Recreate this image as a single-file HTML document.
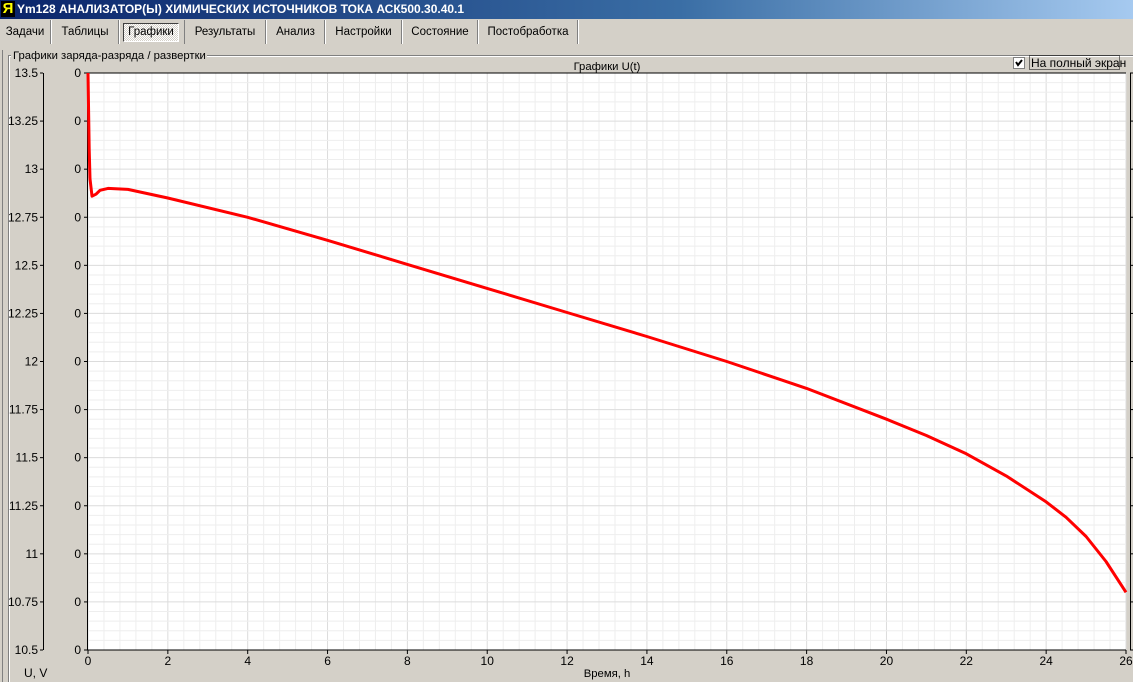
<!DOCTYPE html>
<html><head><meta charset="utf-8"><style>
body{margin:0;width:1133px;height:682px;background:#d4d0c8;overflow:hidden;font-family:"Liberation Sans",sans-serif;font-size:11px;position:relative}
#title{position:absolute;left:0;top:0;width:1133px;height:19px;background:linear-gradient(90deg,#0a246a,#3a6ea5 60%,#a6caf0);color:#fff;font-weight:bold;font-size:12px;line-height:19px}
#title span{position:absolute;left:17px}
#ico{position:absolute;left:1px;top:1px;width:14px;height:16px;background:#000;color:#ff0;font-size:15px;line-height:16px;text-align:center;font-weight:bold}
.tab{position:absolute;top:20px;height:24px;line-height:24px;font-size:11.5px;color:#000;text-align:center;border-right:1px solid #808080;box-shadow:1px 0 0 #fff;box-sizing:border-box}
#sel{border:1px solid #404040;border-right-color:#fff;border-bottom-color:#fff;box-shadow:none;top:23px;height:19px;line-height:17px;background:repeating-conic-gradient(#fff 0 25%,#d4d0c8 0 50%) 0 0/2px 2px}
svg{position:absolute;left:0;top:0}
</style></head><body>
<div id="title"><div id="ico">Я</div><span>Ym128 АНАЛИЗАТОР(Ы) ХИМИЧЕСКИХ ИСТОЧНИКОВ ТОКА АСК500.30.40.1</span></div>
<div class="tab" style="left:0;width:51px">Задачи</div>
<div class="tab" style="left:52px;width:67px">Таблицы</div>
<div class="tab" id="sel" style="left:123px;width:56px">Графики</div>
<div class="tab" style="left:184px;width:82px;border-left:1px solid #808080">Результаты</div>
<div class="tab" style="left:267px;width:58px">Анализ</div>
<div class="tab" style="left:326px;width:76px">Настройки</div>
<div class="tab" style="left:403px;width:75px">Состояние</div>
<div class="tab" style="left:479px;width:99px">Постобработка</div>
<svg id="s" width="1133" height="682" xmlns="http://www.w3.org/2000/svg" font-family="Liberation Sans, sans-serif" font-size="12"></svg>
<script>
var L=88,R=1126,T=73,B=650,o='';
o+='<path d="M8.5,682 V55.5 H11 M207,55.5 H1133" stroke="#808080" fill="none"/><path d="M9.5,682 V56.5 H11 M207,56.5 H1133" stroke="#fff" fill="none"/>';
o+='<text x="13" y="59" font-size="11.3">Графики заряда-разряда / развертки</text>';
o+='<line x1="2.5" y1="50" x2="2.5" y2="682" stroke="#808080"/>';
o+='<rect x="'+L+'" y="'+T+'" width="'+(R-L)+'" height="'+(B-T)+'" fill="#fff"/>';
var px=(R-L)/26, py=(B-T)/3;
for(var i=0;i<=65;i++){var x=L+i*px*0.4;o+='<line x1="'+x+'" y1="'+T+'" x2="'+x+'" y2="'+B+'" stroke="'+(i%5?'#eeeeee':'#dcdcdc')+'"/>';}
for(var j=0;j<=60;j++){var y=T+j*py/20;o+='<line x1="'+L+'" y1="'+y+'" x2="'+R+'" y2="'+y+'" stroke="'+(j%5?'#eeeeee':'#dcdcdc')+'"/>';}
o+='<line x1="'+L+'" y1="'+T+'" x2="'+R+'" y2="'+T+'" stroke="#000"/><line x1="'+L+'" y1="'+B+'" x2="'+R+'" y2="'+B+'" stroke="#000"/>';
o+='<line x1="'+(L-0.5)+'" y1="'+T+'" x2="'+(L-0.5)+'" y2="'+B+'" stroke="#000"/><line x1="43.5" y1="'+T+'" x2="43.5" y2="'+B+'" stroke="#000"/><line x1="'+(R+4.5)+'" y1="'+T+'" x2="'+(R+4.5)+'" y2="'+B+'" stroke="#000"/>';
for(var k=0;k<=12;k++){var y=T+k*py/4,v=13.5-k*0.25;
 o+='<line x1="40" y1="'+y+'" x2="43" y2="'+y+'" stroke="#000"/><text x="38" y="'+(y+4)+'" text-anchor="end">'+(+v.toFixed(2))+'</text>';
 o+='<line x1="84" y1="'+y+'" x2="88" y2="'+y+'" stroke="#000"/><text x="81" y="'+(y+4)+'" text-anchor="end">0</text>';
 o+='<line x1="'+(R+4)+'" y1="'+y+'" x2="'+(R+8)+'" y2="'+y+'" stroke="#000"/><text x="'+(R+9)+'" y="'+(y+4)+'">0</text>';}
for(var h=0;h<=26;h+=2){var x=L+h*px;o+='<line x1="'+x+'" y1="'+B+'" x2="'+x+'" y2="'+(B+4)+'" stroke="#000"/><text x="'+x+'" y="'+(B+15)+'" text-anchor="middle">'+h+'</text>';}
o+='<text x="24" y="677">U, V</text><text x="607" y="677" text-anchor="middle" font-size="11.3">Время, h</text><text x="607" y="70" text-anchor="middle" font-size="11.3">Графики U(t)</text>';
o+='<rect x="1013.5" y="57.5" width="11" height="11" fill="#fff" stroke="#808080"/><path d="M1016,62 l2,3 l4,-5" stroke="#000" stroke-width="2" fill="none"/>';
o+='<rect x="1029.5" y="55.5" width="90" height="14" fill="none" stroke="#000" stroke-dasharray="1,1"/><text x="1031" y="67">На полный экран</text>';
var pts=[[0,13.5],[0.03,13.1],[0.05,12.95],[0.1,12.86],[0.2,12.87],[0.3,12.89],[0.5,12.9],[1,12.895],[2,12.85],[4,12.75],[6,12.63],[8,12.505],[10,12.38],[12,12.255],[14,12.13],[16,12.0],[18,11.86],[20,11.7],[21,11.615],[22,11.52],[23,11.405],[24,11.27],[24.5,11.19],[25,11.09],[25.5,10.96],[26,10.8]];
var d='M';pts.forEach(function(p,i){d+=(i?' L':'')+(L+p[0]*px).toFixed(1)+','+(T+(13.5-p[1])*py).toFixed(1);});
o+='<path d="'+d+'" stroke="#f00" stroke-width="3" fill="none" stroke-linejoin="round"/>';
document.getElementById('s').innerHTML=o;
</script>
</body></html>
